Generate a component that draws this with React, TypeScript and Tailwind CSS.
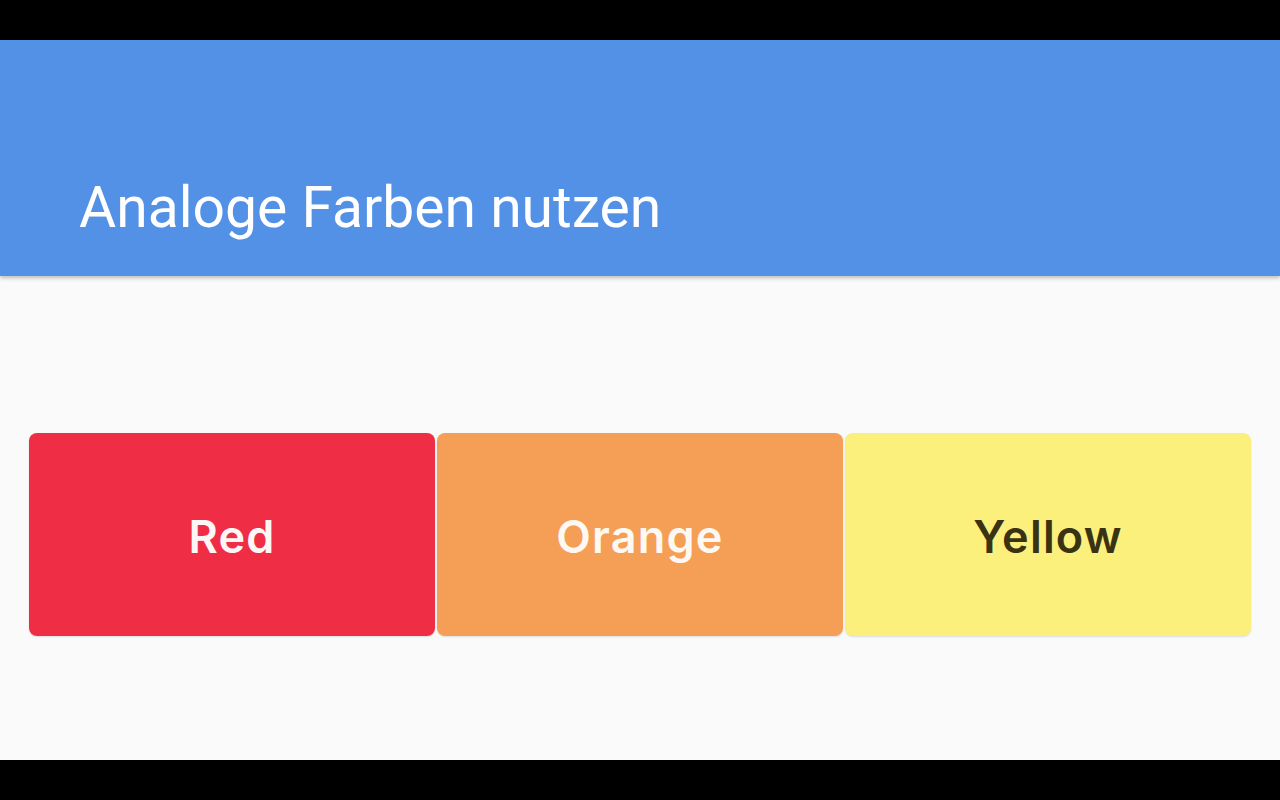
const swatches = [
  { name: 'Red', bg: 'bg-[#ef2e46]', text: 'text-[#fdf6f6]' },
  { name: 'Orange', bg: 'bg-[#f59e56]', text: 'text-[#fdf8f1]' },
  { name: 'Yellow', bg: 'bg-[#faf07b]', text: 'text-[#3a3313]' },
]

export default function App() {
  return (
    <div className="flex h-[800px] flex-col bg-black font-['Roboto',sans-serif]">
      <div className="h-10 shrink-0" />
      <div className="flex flex-1 flex-col bg-[#fafafa]">
        <header className="relative z-10 flex h-[236px] shrink-0 items-end bg-[#5391e7] pb-[40px] pl-[79px] shadow-[0_2px_4px_rgba(0,0,0,0.25)]">
          <h1 className="text-[57px] font-normal leading-none text-white">Analoge Farben nutzen</h1>
        </header>
        <main className="flex flex-1 items-center px-[29px] pt-[33px]">
          <div className="grid w-full grid-cols-3 gap-[2px]">
            {swatches.map((s) => (
              <div
                key={s.name}
                className={`flex h-[203px] items-center justify-center rounded-lg ${s.bg} shadow-[0_1px_2px_rgba(0,0,0,0.12)]`}
              >
                <span className={`pt-1 font-['Inter',sans-serif] text-[45px] font-semibold tracking-[1.2px] ${s.text}`}>
                  {s.name}
                </span>
              </div>
            ))}
          </div>
        </main>
      </div>
      <div className="h-10 shrink-0" />
    </div>
  )
}
